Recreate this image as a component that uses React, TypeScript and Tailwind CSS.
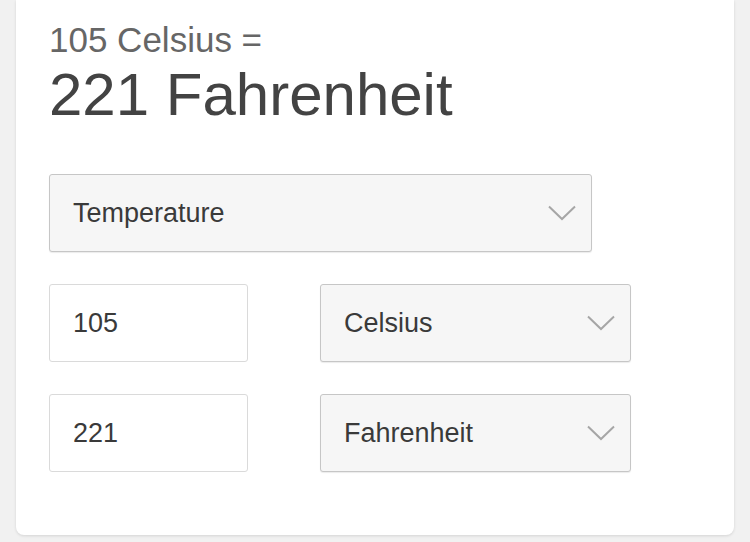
import React from 'react'

function Chevron() {
    return (
        <svg width="28" height="16" viewBox="0 0 28 16" fill="none" className="shrink-0">
            <path d="M1 1.5 L14 14 L27 1.5" stroke="#a6a6a6" strokeWidth="2" />
        </svg>
    )
}

function SelectBox({ label, className }: { label: string; className: string }) {
    return (
        <div className={`flex items-center justify-between h-[78px] pl-[23px] pr-[15px] bg-[#f6f6f6] border border-[#c6c6c6] rounded-[3px] shadow-[0_1px_1px_rgba(0,0,0,0.08)] ${className}`}>
            <span className="text-[27px] leading-none text-[#3a3a3a]">{label}</span>
            <Chevron />
        </div>
    )
}

function ValueBox({ value }: { value: string }) {
    return (
        <div className="flex items-center h-[78px] w-[199px] pl-[23px] bg-white border border-[#dadada] rounded-[3px]">
            <span className="text-[27px] leading-none text-[#3a3a3a]">{value}</span>
        </div>
    )
}

export default function App() {
    return (
        <div className="min-h-[542px] bg-[#f1f1f1] px-4 pb-[7px]" style={{ fontFamily: '"Liberation Sans", Arial, sans-serif' }}>
            <div className="bg-white rounded-b-lg shadow-[0_1px_3px_rgba(0,0,0,0.12)] pl-[33px] pt-[22px] pb-[63px]">
                <p className="text-[35px] leading-none text-[#666666]">105 Celsius =</p>
                <p className="text-[60px] leading-none text-[#434343] mt-2">221 Fahrenheit</p>

                <div className="flex flex-col gap-8 mt-[49px]">
                    <SelectBox label="Temperature" className="w-[543px] pr-4" />

                    <div className="flex flex-row gap-[72px]">
                        <ValueBox value="105" />
                        <SelectBox label="Celsius" className="w-[311px]" />
                    </div>

                    <div className="flex flex-row gap-[72px]">
                        <ValueBox value="221" />
                        <SelectBox label="Fahrenheit" className="w-[311px]" />
                    </div>
                </div>
            </div>
        </div>
    )
}
